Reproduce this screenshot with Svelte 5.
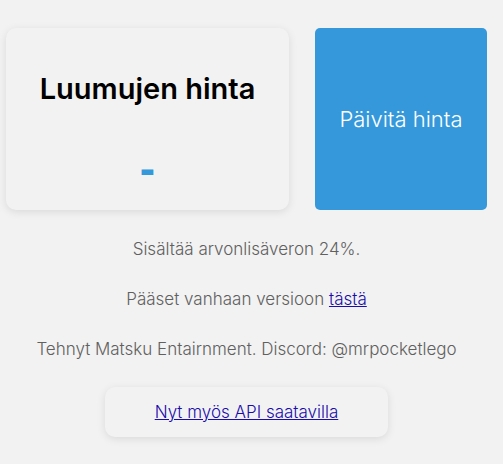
<script>
  let price = "-";

  function updatePrice() {
    price = "-";
  }
</script>

<style>
  :global(body) {
    background-color: #f2f2f2;
    font-family: Inter, "Liberation Sans", sans-serif;
    font-weight: 300;
  }

  main {
    padding: 28px 16px 26px 6px;
    text-align: center;
  }

  .top {
    display: grid;
    grid-template-columns: 283fr 172fr;
    gap: 26px;
    margin-bottom: 27px;
  }

  .card {
    background-color: #f2f2f2;
    border-radius: 10px;
    box-shadow: 0 2px 8px rgba(0, 0, 0, 0.1);
  }

  .price-card {
    padding: 40px 16px 18px;
  }

  h1 {
    margin: 0 0 34px;
    font-size: 29px;
    line-height: 42px;
    font-weight: 600;
    color: #000;
  }

  .price {
    margin: 0;
    font-family: "Liberation Sans", Arial, sans-serif;
    font-size: 46px;
    line-height: 48px;
    font-weight: 700;
    color: #3498db;
  }

  button {
    border: none;
    border-radius: 5px;
    padding: 0;
    background-color: #3498db;
    color: white;
    font-family: inherit;
    font-size: 22px;
    font-weight: 300;
    cursor: pointer;
  }

  .info {
    margin: 26px 0;
    font-size: 17px;
    line-height: 24px;
    color: #606060;
  }

  a {
    color: #1a0dab;
  }

  .api {
    width: 59%;
    margin: 0 auto;
    font-size: 17px;
    line-height: 50px;
  }
</style>

<main>
  <div class="top">
    <div class="card price-card">
      <h1>Luumujen hinta</h1>
      <p class="price">{price}</p>
    </div>
    <button on:click={updatePrice}>Päivitä hinta</button>
  </div>
  <p class="info">Sisältää arvonlisäveron 24%.</p>
  <p class="info">Pääset vanhaan versioon <a href="#vanha">tästä</a></p>
  <p class="info">Tehnyt Matsku Entairnment. Discord: @mrpocketlego</p>
  <div class="card api">
    <a href="#api">Nyt myös API saatavilla</a>
  </div>
</main>
